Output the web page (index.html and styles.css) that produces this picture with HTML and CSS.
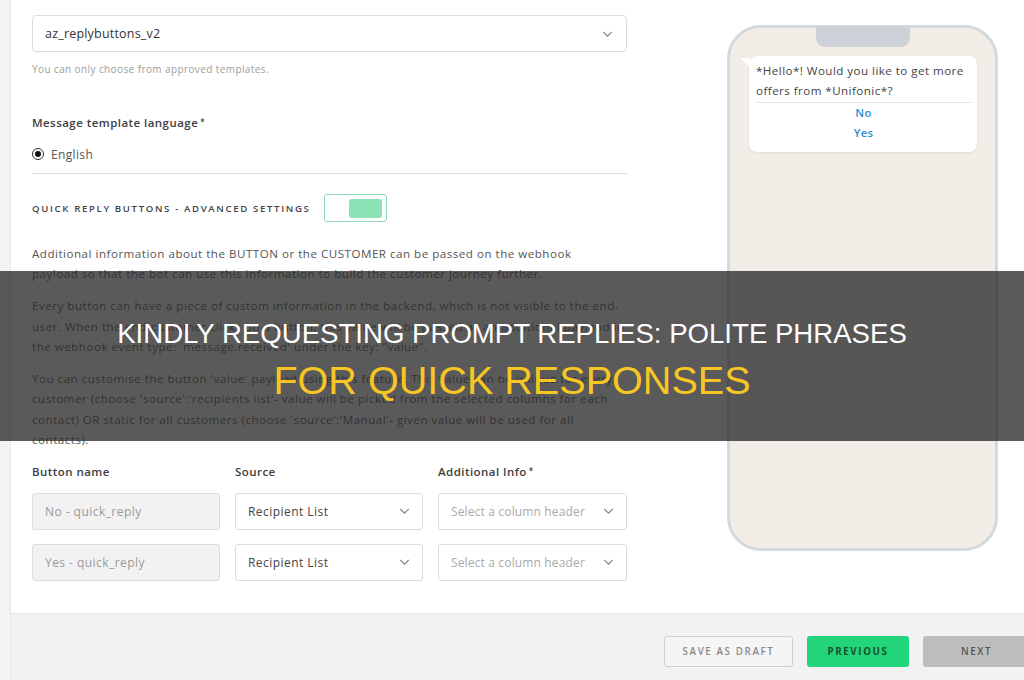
FILE: index.html
```html
<!DOCTYPE html>
<html>
<head>
<meta charset="utf-8">
<link rel="stylesheet" href="styles.css">
</head>
<body>
<div class="page">
  <div class="rail"></div>
  <div class="main">
    <div class="card">
      <div class="form">
        <div class="select big">
          <span class="val">az_replybuttons_v2</span>
          <svg class="chev" viewBox="0 0 12 7" width="11" height="6"><path d="M1 1 L6 6 L11 1" fill="none" stroke="#808080" stroke-width="1.3"/></svg>
        </div>
        <div class="hint">You can only choose from approved templates.</div>

        <div class="label lang">Message template language<sup>*</sup></div>
        <div class="radio-row">
          <span class="radio"><span class="dot"></span></span>
          <span class="radio-text">English</span>
        </div>
        <div class="divider"></div>

        <div class="adv-row">
          <span class="adv">QUICK REPLY BUTTONS - ADVANCED SETTINGS</span>
          <span class="toggle"><span class="knob"></span></span>
        </div>

        <div class="paras">
          <p>Additional information about the BUTTON or the CUSTOMER can be passed on the webhook<br>payload so that the bot can use this information to build the customer journey further.</p>
          <p>Every button can have a piece of custom information in the backend, which is not visible to the end-user. When the end-customer clicks on a button, this value will be passed as an additional payload in the webhook event type: 'message.received' under the key: "value".</p>
          <p>You can customise the button 'value' payload using this feature. This value can be unique for every customer (choose 'source':'recipients list'- value will be picked from the selected columns for each contact) OR static for all customers (choose 'source':'Manual'- given value will be used for all<br>contacts).</p>
        </div>

        <div class="grid">
          <div class="label">Button name</div>
          <div class="label">Source</div>
          <div class="label">Additional Info<sup>*</sup></div>

          <div class="field disabled">No - quick_reply</div>
          <div class="field select"><span class="val">Recipient List</span><svg class="chev" viewBox="0 0 12 7" width="11" height="6"><path d="M1 1 L6 6 L11 1" fill="none" stroke="#808080" stroke-width="1.3"/></svg></div>
          <div class="field select"><span class="ph">Select a column header</span><svg class="chev" viewBox="0 0 12 7" width="11" height="6"><path d="M1 1 L6 6 L11 1" fill="none" stroke="#808080" stroke-width="1.3"/></svg></div>

          <div class="field disabled">Yes - quick_reply</div>
          <div class="field select"><span class="val">Recipient List</span><svg class="chev" viewBox="0 0 12 7" width="11" height="6"><path d="M1 1 L6 6 L11 1" fill="none" stroke="#808080" stroke-width="1.3"/></svg></div>
          <div class="field select"><span class="ph">Select a column header</span><svg class="chev" viewBox="0 0 12 7" width="11" height="6"><path d="M1 1 L6 6 L11 1" fill="none" stroke="#808080" stroke-width="1.3"/></svg></div>
        </div>
      </div>

      <div class="preview">
        <div class="phone">
          <div class="notch"></div>
          <div class="bubble">
            <span class="tail"></span>
            <div class="msg">*Hello*! Would you like to get more offers from *Unifonic*?</div>
            <div class="btns">
              <div class="qr">No</div>
              <div class="qr">Yes</div>
            </div>
          </div>
        </div>
      </div>
    </div>
    <div class="footer">
      <button class="btn draft">SAVE AS DRAFT</button>
      <button class="btn prev">PREVIOUS</button>
      <button class="btn next">NEXT</button>
    </div>
  </div>
</div>
<div class="banner">
  <div class="t1">KINDLY REQUESTING PROMPT REPLIES: POLITE PHRASES</div>
  <div class="t2">FOR QUICK RESPONSES</div>
</div>
</body>
</html>
```
FILE: styles.css
```css
* { box-sizing: border-box; }
html, body { margin: 0; padding: 0; }
body {
  width: 1024px;
  height: 680px;
  overflow: hidden;
  background: #f2f2f2;
  font-family: "Open Sans", "DejaVu Sans", sans-serif;
  color: #4a4a4a;
  position: relative;
}
.page { display: flex; height: 680px; }
.rail { width: 11px; background: #f3f3f3; border-right: 1px solid #e8e8e8; }
.main { flex: 1; display: flex; flex-direction: column; }
.card {
  flex: 1;
  background: #fff;
  display: flex;
  padding: 15px 0 0 21px;
  border-bottom: 1px solid #e6e6e6;
}
.form { width: 595px; display: flex; flex-direction: column; }

.select {
  display: flex;
  align-items: center;
  justify-content: space-between;
  border: 1px solid #dcdcdc;
  border-radius: 4px;
  background: #fff;
}
.select.big { height: 37px; padding: 0 13px 0 12px; font-size: 12.5px; letter-spacing: 0.2px; color: #333; }
.chev { flex: none; }
.hint { font-size: 10px; letter-spacing: 0.4px; color: #9d9d9d; margin-top: 11px; height: 12px; line-height: 12px; }

.label { font-size: 11.5px; letter-spacing: 0.45px; font-weight: 600; color: #3e3e3e; }
.label sup { font-size: 8px; vertical-align: top; position: relative; top: -1px; margin-left: 2px; }
.lang { margin-top: 41px; line-height: 14px; }
.radio-row { display: flex; align-items: center; margin-top: 17px; height: 14px; }
.radio {
  width: 12px; height: 12px; border: 1.5px solid #333; border-radius: 50%;
  display: flex; align-items: center; justify-content: center;
}
.radio .dot { width: 6px; height: 6px; background: #111; border-radius: 50%; }
.radio-text { margin-left: 7px; font-size: 12px; letter-spacing: 0.35px; color: #555; }
.divider { height: 1px; background: #dddddd; margin-top: 12px; }

.adv-row { display: flex; align-items: center; margin-top: 20px; height: 28px; }
.adv { font-size: 9.6px; font-weight: 600; letter-spacing: 1.65px; color: #444; }
.toggle {
  margin-left: 14px;
  width: 63px; height: 28px;
  border: 1.5px solid #8fdcb3;
  border-radius: 3px;
  display: flex; align-items: center; justify-content: flex-end;
  padding-right: 4px;
}
.knob { width: 33px; height: 19px; background: #8de2b5; border-radius: 3px; }

.paras { margin-top: 22px; width: 605px; }
.paras p { margin: 0 0 11.5px; font-size: 11.6px; letter-spacing: 0.5px; line-height: 20.4px; color: #555; }
.paras p:last-child { margin-bottom: 0; }

.grid {
  display: grid;
  grid-template-columns: 188px 188px 189px;
  column-gap: 15px;
  row-gap: 0;
  margin-top: 14px;
}
.grid .label { height: 28px; line-height: 14px; }
.field {
  height: 37px;
  border: 1px solid #dcdcdc;
  border-radius: 3px;
  font-size: 12px;
  letter-spacing: 0.45px;
  display: flex; align-items: center;
  padding: 0 12px;
  margin-bottom: 14px;
}
.field.disabled { background: #f2f2f2; color: #9a9a9a; }
.field.select { justify-content: space-between; }
.field .val { color: #444; }
.field .ph { color: #aaa; white-space: nowrap; overflow: hidden; letter-spacing: 0.15px; }
.field .chev { margin-left: 5px; }

.preview { flex: 1; padding-left: 100px; padding-top: 10px; }
.phone {
  width: 271px; height: 526px;
  border: 3px solid #d5d8dc;
  border-radius: 34px;
  background: #f3ede7;
  position: relative;
  padding: 28px 18px 0 19px;
}
.notch {
  position: absolute;
  left: 86px; top: -1px;
  width: 94px; height: 20px;
  background: #cdd2d8;
  border-radius: 0 0 9px 9px;
}
.bubble {
  position: relative;
  background: #fff;
  border-radius: 8px;
  width: 228px;
  padding: 5px 6px 9px 7px;
  box-shadow: 0 1px 3px rgba(0,0,0,0.08);
}
.tail {
  position: absolute;
  left: -9px; top: 2px;
  width: 0; height: 0;
  border-right: 10px solid #fff;
  border-bottom: 9px solid transparent;
}
.msg { font-size: 11.6px; letter-spacing: 0.45px; line-height: 20px; color: #444; padding-bottom: 1px; border-bottom: 1px solid #e2e2e2; }
.qr { text-align: center; color: #2f8fd0; font-size: 11.3px; letter-spacing: 0.3px; line-height: 20px; font-weight: 600; }
.btns { padding-top: 0; }

.footer {
  height: 66px;
  display: flex;
  align-items: flex-start;
  justify-content: flex-end;
  gap: 14px;
  overflow: hidden;
  padding-top: 22px;
}
.btn {
  height: 31px;
  border-radius: 3px;
  font-family: "Open Sans", "DejaVu Sans", sans-serif;
  font-size: 9.8px;
  font-weight: 600;
  letter-spacing: 1.6px;
  cursor: pointer;
}
.draft { width: 129px; background: #f5f5f5; border: 1px solid #cfcfcf; color: #8a8a8a; }
.prev { width: 102px; background: #22d47a; border: none; color: #17522f; font-weight: 700; }
.next { width: 107px; margin-right: -6px; background: #bdbdbd; border: none; color: #555; }

.banner {
  position: absolute;
  left: 0; top: 271px;
  width: 1024px; height: 170px;
  background: rgba(40,40,40,0.77);
  display: flex; flex-direction: column; align-items: center;
  font-family: "Liberation Sans", Arial, sans-serif;
}
.t1 { color: #fff; font-size: 27.6px; line-height: 30px; margin-top: 48px; }
.t2 { color: #f7c624; font-size: 39.6px; line-height: 44px; margin-top: 9px; }
```
